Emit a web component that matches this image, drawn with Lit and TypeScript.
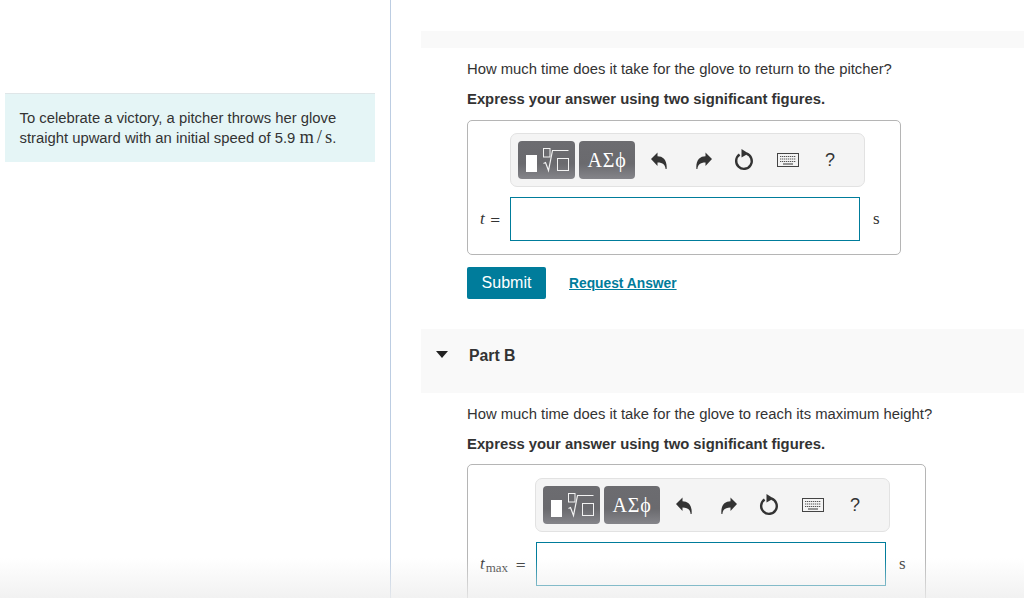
import { LitElement, html, css, svg } from "lit";
import { customElement, property } from "lit/decorators.js";

const undo = svg`<path d="M0 7 L6.5 .5 V4.2 C12 4.2 16.4 8 15.6 17 H14.6 C14.4 13 12 10.4 6.5 10.4 V14 Z" fill="#333"/>`;
const redo = svg`<path d="M16 7 L9.5 .5 V4.2 C4 4.2 -.4 8 .4 17 H1.4 C1.6 13 4 10.4 9.5 10.4 V14 Z" fill="#333"/>`;

@customElement("math-editor")
class MathEditor extends LitElement {
  @property() unit = "s";
  @property({ type: Boolean }) wide = false;
  static styles = css`
    :host { display: block; }
    .box {
      box-sizing: border-box; border: 1px solid #b5b5b5; border-radius: 5px;
      padding: 12px 12px 13px 12px; height: 135px; width: 434px; background: #fff;
    }
    .box.wide { width: 459px; height: 150px; padding-top: 13px; }
    .toolbar {
      box-sizing: border-box; width: 355px; height: 54px; margin-left: 30px;
      background: #f4f4f4; border: 1px solid #e2e2e2; border-radius: 7px;
      display: flex; align-items: center; padding-left: 7px;
    }
    .wide .toolbar { margin-left: 55px; }
    .tbtn {
      box-sizing: border-box; height: 38px; border-radius: 4px;
      background: linear-gradient(#6c6c70, #6a6a6e 60%, #85858a);
      display: flex; align-items: center; justify-content: center;
      color: #fff; margin-right: 4px;
    }
    .t1 { width: 57px; }
    .t2 { width: 56px; margin-right: 0; font: 20px "Liberation Serif", serif; letter-spacing: .8px; }
    .icons { display: flex; align-items: center; margin-left: 16px; }
    .ic { display: block; }
    .ic.redo { margin-left: 29px; }
    .ic.reload { margin-left: 22px; }
    .ic.kb { margin-left: 23px; }
    .q { margin-left: 26px; font: 18px "Liberation Sans", sans-serif; color: #333; line-height: 20px; }
    .row { display: flex; align-items: center; margin-top: 10px; }
    .lab { box-sizing: border-box; width: 30px; white-space: nowrap; color: #333; }
    .wide .lab { width: 56px; }
    .lab i { font: italic 17px "Liberation Serif", serif; }
    .lab sub { font: 13px "Liberation Serif", serif; vertical-align: -3px; line-height: 0; margin-left: 1px; margin-right: 7px; }
    .lab .eq { font: 13px "DejaVu Sans", sans-serif; margin-left: 5px; }
    .wide .lab .eq { margin-left: 0; }
    .field { box-sizing: border-box; width: 350px; height: 44px; border: 1px solid #007c9b; background: #fff; }
    .unit { margin-left: 13px; font: 17px "Liberation Serif", serif; color: #333; padding-bottom: 1px; }
  `;
  render() {
    return html`<div class="box ${this.wide ? "wide" : ""}">
      <div class="toolbar">
        <div class="tbtn t1">
          <svg width="57" height="38" viewBox="0 0 57 38">
            <rect x="8" y="14" width="11" height="17" fill="#fff"/>
            <rect x="25.5" y="7.5" width="6.5" height="8.5" fill="none" stroke="#f2f2f2"/>
            <path d="M25.5 22.5 L27.5 21.5 L30.5 29.5 L34.5 9.5 H50.5" fill="none" stroke="#f2f2f2" stroke-width="1.2"/>
            <rect x="39.5" y="17.5" width="11" height="12" fill="none" stroke="#f2f2f2"/>
          </svg>
        </div>
        <div class="tbtn t2">ΑΣϕ</div>
        <div class="icons">
          <svg class="ic" width="16" height="17" viewBox="0 0 16 17">${undo}</svg>
          <svg class="ic redo" width="16" height="17" viewBox="0 0 16 17">${redo}</svg>
          <svg class="ic reload" width="20" height="22" viewBox="0 0 20 22">
            <path d="M12.5 4.7 A7.8 7.8 0 1 1 5.6 5.6" fill="none" stroke="#333" stroke-width="2.4"/>
            <path d="M7.5 0 L14.5 4.5 L7.5 8.5 Z" fill="#333"/>
          </svg>
          <svg class="ic kb" width="22" height="14" viewBox="0 0 22 14">
            <rect x=".5" y=".5" width="21" height="13" fill="#f4f4f4" stroke="#444"/>
            <path d="M3 3.5 H19 M3 6 H19 M3 8.5 H19" stroke="#555" stroke-width="1.2" stroke-dasharray="1.3 .7"/>
            <path d="M6 11 H16" stroke="#555" stroke-width="1.2"/>
          </svg>
          <span class="q">?</span>
        </div>
      </div>
      <div class="row">
        <div class="lab">${this.wide
          ? html`<i>t</i><sub>max</sub><span class="eq">=</span>`
          : html`<i>t</i><span class="eq">=</span>`}</div>
        <div class="field"></div>
        <div class="unit">${this.unit}</div>
      </div>
    </div>`;
  }
}

@customElement("app-root")
export class AppRoot extends LitElement {
  static styles = css`
    :host {
      display: block; position: relative; width: 1024px; height: 598px; overflow: hidden;
      background: #fff; color: #333;
      font: 14.82px/20px "Liberation Sans", Arial, sans-serif;
    }
    .page { display: flex; height: 598px; }
    .left { box-sizing: border-box; width: 391px; height: 598px; flex: none;
      border-right: 1px solid #bccde2; padding: 93px 15px 0 5px; }
    .statement { box-sizing: border-box; height: 69px; background: #e5f5f6;
      border-top: 1px solid #dfe6e8; padding: 13.5px 15px 0 14.5px; color: #333; }
    .math { font: 18.5px/0 "Liberation Serif", serif; }
    .math .sl { margin: 0 3px; }
    .right { flex: 1; padding: 31px 0 0 30px; min-width: 0; }
    .bar { height: 17px; background: #f9f9f9; }
    .body { padding-left: 46px; }
    p { margin: 0; white-space: nowrap; }
    .q1 { margin-top: 11px; }
    .bold { font-weight: 700; margin-top: 10px; }
    math-editor { margin-top: 11px; }
    math-editor.second { margin-top: 10px; }
    .actions { display: flex; align-items: center; margin-top: 12px; }
    .submit { box-sizing: border-box; width: 79px; height: 32px; background: #007c9b; color: #fff;
      border-radius: 2px; display: flex; align-items: center; justify-content: center;
      font-size: 16px; }
    .link { margin-left: 23px; padding-top: 1px; color: #007c9b; font-weight: 700; font-size: 13.8px; text-decoration: underline; }
    .part { height: 64px; margin-top: 30px; background: #f9f9f9; display: flex; align-items: flex-start;
      padding-top: 17px; box-sizing: border-box; }
    .tri { width: 0; height: 0; border-left: 6.5px solid transparent; border-right: 6.5px solid transparent;
      border-top: 7px solid #222; margin: 5px 0 0 15px; }
    .part b { margin-left: 21px; font-size: 15.8px; color: #333; }
    .q2 { margin-top: 11px; }
    .fade { position: absolute; left: 0; right: 0; bottom: 0; height: 40px; pointer-events: none;
      background: linear-gradient(rgba(238,238,238,0), rgba(238,238,238,.8)); }
  `;
  render() {
    return html`<div class="page">
      <div class="left">
        <div class="statement">To celebrate a victory, a pitcher throws her glove<br />straight upward with an initial speed of 5.9 <span class="math">m<span class="sl">/</span>s</span>.</div>
      </div>
      <div class="right">
        <div class="bar"></div>
        <div class="body">
          <p class="q1">How much time does it take for the glove to return to the pitcher?</p>
          <p class="bold">Express your answer using two significant figures.</p>
          <math-editor></math-editor>
          <div class="actions">
            <div class="submit">Submit</div>
            <a class="link">Request Answer</a>
          </div>
        </div>
        <div class="part"><span class="tri"></span><b>Part B</b></div>
        <div class="body">
          <p class="q2">How much time does it take for the glove to reach its maximum height?</p>
          <p class="bold">Express your answer using two significant figures.</p>
          <math-editor class="second" wide></math-editor>
        </div>
      </div>
    </div>
    <div class="fade"></div>`;
  }
}
